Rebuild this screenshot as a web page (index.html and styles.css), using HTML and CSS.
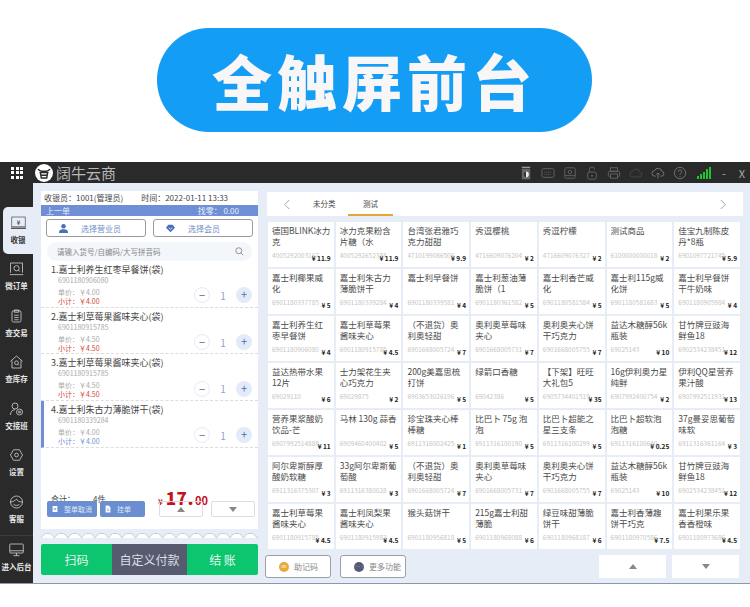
FILE: index.html
```html
<!DOCTYPE html>
<html lang="zh-CN">
<head>
  <meta charset="UTF-8" />
  <title>全触屏前台</title>
  <link rel="stylesheet" href="styles.css">
</head>
<body>
  <!-- Banner -->
  <div class="banner">
    <div class="pill">全触屏前台</div>
  </div>

  <div class="app">
    <!-- Title bar -->
    <header class="titlebar">
      <div class="grid-btn"><i></i><i></i><i></i><i></i><i></i><i></i><i></i><i></i><i></i></div>
      <svg class="logo" viewBox="0 0 20 20"><circle cx="10" cy="10" r="10" fill="#fff"/><path d="M3.5 5.5c1 2 2.500 2.500 6.500 2.500s5.500-.5 6.500-2.500M5 9.500h10M6 9.500l1 6h6l1-6M6.500 12.500h7" fill="none" stroke="#2a2a2a" stroke-width="1.600"/></svg>
      <span class="app-name">阔牛云商</span>
      <div class="tools">
        <svg viewBox="0 0 16 20" class="tool"><rect x="2" y="1" width="12" height="2" fill="#999"/><rect x="2" y="4" width="12" height="15" fill="#666"/><circle cx="8" cy="12" r="4" fill="#eee"/><path d="M8 8a4 4 0 0 0 0 8z" fill="#333"/></svg>
        <svg viewBox="0 0 16 16" class="tool"><rect x="1" y="3" width="14" height="10" rx="2" fill="none" stroke="#666"/><path d="M4 7h8M4 9.500h8" stroke="#666" stroke-dasharray="1 1"/></svg>
        <svg viewBox="0 0 16 16" class="tool"><rect x="2" y="2" width="12" height="12" rx="2" fill="none" stroke="#666"/><circle cx="8" cy="7" r="2" fill="none" stroke="#666"/><path d="M2 11h12" stroke="#666"/></svg>
        <svg viewBox="0 0 16 16" class="tool"><rect x="3" y="7" width="10" height="8" rx="2" fill="none" stroke="#666"/><path d="M5 7V4a3 3 0 0 1 6 0" fill="none" stroke="#666"/><circle cx="8" cy="11" r="1" fill="#666"/></svg>
        <svg viewBox="0 0 16 16" class="tool"><rect x="4" y="2" width="8" height="4" fill="none" stroke="#666"/><rect x="1.500" y="6" width="13" height="6" rx="1.500" fill="none" stroke="#666"/><rect x="4" y="9" width="8" height="5" fill="#2a2a2a" stroke="#666"/></svg>
        <svg viewBox="0 0 18 16" class="tool"><path d="M5 13a3.500 3.500 0 0 1-.5-7 5 5 0 0 1 9.500 1 3 3 0 0 1-1 6z" fill="none" stroke="#4c4c4c"/></svg>
        <svg viewBox="0 0 18 16" class="tool"><path d="M6 12H5a3.500 3.500 0 0 1-.5-7 5 5 0 0 1 9.500 1 3 3 0 0 1-1 6h-1M9 15V8M7 10l2-2 2 2" fill="none" stroke="#888"/></svg>
        <svg viewBox="0 0 16 16" class="tool"><circle cx="8" cy="8" r="6.500" fill="none" stroke="#777"/><path d="M6 6.500a2 2 0 1 1 2.500 2c-.5.200-.5.500-.5 1.500M8 11.500v1" fill="none" stroke="#777"/></svg>
        <div class="signal"><i></i><i></i><i></i><i></i><i></i></div>
        <span class="win-btn">-</span>
        <span class="win-btn">X</span>
      </div>
    </header>

    <div class="main">
      <!-- Side nav -->
      <nav class="side">
        <div class="side-item active">
          <svg viewBox="0 0 20 18"><rect x="1" y="1" width="18" height="13" fill="none" stroke="#555"/><path d="M0 16h20" stroke="#555" stroke-width="2"/><text x="10" y="11" font-size="8" text-anchor="middle" fill="#555">¥</text></svg>
          <span>收银</span>
        </div>
        <div class="side-item">
          <svg viewBox="0 0 20 18"><path d="M2 14V1h16v13" fill="none" stroke="#ddd"/><circle cx="10" cy="8" r="3.500" fill="none" stroke="#ddd"/><path d="M12.500 10.500l2 2M1 16.500h18" stroke="#ddd"/></svg>
          <span>微订单</span>
        </div>
        <div class="side-item">
          <svg viewBox="0 0 20 18"><rect x="4" y="2" width="12" height="15" rx="2" fill="none" stroke="#ddd"/><path d="M7 1h6v3H7zM7 8h6M7 11h6M7 14h6" fill="none" stroke="#ddd"/></svg>
          <span>查交易</span>
        </div>
        <div class="side-item">
          <svg viewBox="0 0 20 18"><path d="M2 8l8-7 8 7M4 7v10h12V7" fill="none" stroke="#ddd"/><circle cx="10" cy="10" r="2.500" fill="none" stroke="#ddd"/><path d="M12 12l1.500 1.500" stroke="#ddd"/></svg>
          <span>查库存</span>
        </div>
        <div class="side-item">
          <svg viewBox="0 0 20 18"><circle cx="8" cy="5" r="4" fill="none" stroke="#ddd"/><path d="M2 17c0-4 2-7 6-7" fill="none" stroke="#ddd"/><circle cx="14" cy="13" r="4" fill="none" stroke="#ddd"/><path d="M12 12h4M12 14h4" stroke="#ddd"/></svg>
          <span>交接班</span>
        </div>
        <div class="side-item">
          <svg viewBox="0 0 20 18"><path d="M6 2h8l4 7-4 7H6L2 9z" fill="none" stroke="#ddd"/><circle cx="10" cy="9" r="2.500" fill="none" stroke="#ddd"/></svg>
          <span>设置</span>
        </div>
        <div class="side-item">
          <svg viewBox="0 0 20 18"><circle cx="10" cy="9" r="8" fill="none" stroke="#ddd"/><path d="M2 9c4 0 6-2 8-4 1 3 4 4 8 4M6 12c2 2 6 2 8 0" fill="none" stroke="#ddd"/></svg>
          <span>客服</span>
        </div>
        <div class="side-item backend">
          <svg viewBox="0 0 20 18"><rect x="1" y="1" width="18" height="12" rx="1" fill="none" stroke="#ddd"/><path d="M1 10h18M10 13v3M6 16.500h8" stroke="#ddd"/></svg>
          <span>进入后台</span>
        </div>
      </nav>

      <!-- Cart -->
      <section class="cart">
        <div class="cart-paper">
          <div class="cashier"><span>收银员：1001(管理员)</span><span>时间：2022-01-11 13:33</span></div>
          <div class="last-order"><span>上一单</span><span class="change">找零：&nbsp;0.00</span></div>
          <div class="pick-row">
            <div class="pick-btn">
              <svg viewBox="0 0 12 12"><circle cx="6" cy="3" r="3" fill="#4a70b8"/><path d="M0 12c0-4 2-5 6-5s6 1 6 5z" fill="#4a70b8"/></svg>
              <span>选择营业员</span>
            </div>
            <div class="pick-btn">
              <svg viewBox="0 0 12 12"><path d="M3 1h6l3 4-6 6-6-6z" fill="#4a70b8"/><path d="M3.500 5L6 7l2.500-2" fill="none" stroke="#fff"/></svg>
              <span>选择会员</span>
            </div>
          </div>
          <div class="search">
            <span>请输入货号/自编码/大写拼音码</span>
            <svg viewBox="0 0 12 12"><circle cx="5" cy="5" r="4" fill="none" stroke="#777"/><path d="M8 8l3 3" stroke="#777"/></svg>
          </div>

          <div class="cart-item">
            <div class="item-info">
              <div class="item-name">1.嘉士利养生红枣早餐饼(袋)</div>
              <div class="item-code">6901180906080</div>
              <div class="item-price">单价：￥4.00</div>
              <div class="item-sub">小计：￥4.00</div>
            </div>
            <div class="qty"><b class="minus">−</b><span>1</span><b class="plus">+</b></div>
          </div>
          <div class="cart-item">
            <div class="item-info">
              <div class="item-name">2.嘉士利草莓果酱味夹心(袋)</div>
              <div class="item-code">6901180915785</div>
              <div class="item-price">单价：￥4.50</div>
              <div class="item-sub">小计：￥4.50</div>
            </div>
            <div class="qty"><b class="minus">−</b><span>1</span><b class="plus">+</b></div>
          </div>
          <div class="cart-item">
            <div class="item-info">
              <div class="item-name">3.嘉士利草莓果酱味夹心(袋)</div>
              <div class="item-code">6901180915785</div>
              <div class="item-price">单价：￥4.50</div>
              <div class="item-sub">小计：￥4.50</div>
            </div>
            <div class="qty"><b class="minus">−</b><span>1</span><b class="plus">+</b></div>
          </div>
          <div class="cart-item selected">
            <div class="item-info">
              <div class="item-name">4.嘉士利朱古力薄脆饼干(袋)</div>
              <div class="item-code">6901180339284</div>
              <div class="item-price">单价：￥4.00</div>
              <div class="item-sub">小计：￥4.00</div>
            </div>
            <div class="qty"><b class="minus">−</b><span>1</span><b class="plus">+</b></div>
          </div>

          <div class="totals">
            <div class="sum"><span>合计：</span><span>4件</span></div>
            <div class="amount"><small>¥</small><strong>17.</strong><em>00</em></div>
          </div>
          <div class="cart-actions">
            <div class="blue-btn wide">
              <svg viewBox="0 0 10 12"><path d="M1 1h8v10H1z" fill="#fff"/><path d="M3 6h4" stroke="#6b8ed0" stroke-width="2"/></svg>
              <span>整单取消</span>
            </div>
            <div class="blue-btn">
              <svg viewBox="0 0 10 12"><path d="M1 0h5l3 3v9H1z" fill="#fff"/><path d="M3 6h4M3 8.500h4" stroke="#6b8ed0"/></svg>
              <span>挂单</span>
            </div>
            <div class="page-btn up"><i></i></div>
            <div class="page-btn down"><i></i></div>
          </div>
          <div class="wave"></div>
        </div>
        <div class="pay-row">
          <div class="pay green">扫码</div>
          <div class="pay slate">自定义付款</div>
          <div class="pay green">结 账</div>
        </div>
      </section>

      <!-- Goods -->
      <section class="goods">
        <div class="tabs">
          <svg class="chev" viewBox="0 0 8 14"><path d="M7 1L1 7l6 6" fill="none" stroke="#888"/></svg>
          <span class="tab first">未分类</span>
          <span class="tab current">测试</span>
          <svg class="chev right" viewBox="0 0 8 14"><path d="M1 1l6 6-6 6" fill="none" stroke="#888"/></svg>
        </div>

        <div class="goods-grid">
          <div class="good"><p>德国BLINK冰力克</p><div><span>4005292003167</span><b>¥ 11.9</b></div></div>
          <div class="good"><p>冰力克果粉含片糖（水</p><div><span>4005292652384</span><b>¥ 11.9</b></div></div>
          <div class="good"><p>台湾张君雅巧克力甜甜</p><div><span>4710199086506</span><b>¥ 9.9</b></div></div>
          <div class="good"><p>秀逗樱桃</p><div><span>4716609076204</span><b>¥ 2</b></div></div>
          <div class="good"><p>秀逗柠檬</p><div><span>4716609076327</span><b>¥ 2</b></div></div>
          <div class="good"><p>测试商品</p><div><span>6100000000018</span><b>¥ 2</b></div></div>
          <div class="good"><p>佳宝九制陈皮丹*8瓶</p><div><span>6901097721745</span><b>¥ 5.9</b></div></div>

          <div class="good"><p>嘉士利椰果威化</p><div><span>6901180337785</span><b>¥ 5</b></div></div>
          <div class="good"><p>嘉士利朱古力薄脆饼干</p><div><span>6901180339284</span><b>¥ 4</b></div></div>
          <div class="good"><p>嘉士利早餐饼</p><div><span>6901180339581</span><b>¥ 4</b></div></div>
          <div class="good"><p>嘉士利葱油薄脆饼（1</p><div><span>6901180361582</span><b>¥ 5</b></div></div>
          <div class="good"><p>嘉士利香芒威化</p><div><span>6901180581584</span><b>¥ 5</b></div></div>
          <div class="good"><p>嘉士利115g威化饼</p><div><span>6901180581683</span><b>¥ 5</b></div></div>
          <div class="good"><p>嘉士利早餐饼干牛奶味</p><div><span>6901180905984</span><b>¥ 4</b></div></div>

          <div class="good"><p>嘉士利养生红枣早餐饼</p><div><span>6901180906080</span><b>¥ 4</b></div></div>
          <div class="good"><p>嘉士利草莓果酱味夹心</p><div><span>6901180915785</span><b>¥ 4.5</b></div></div>
          <div class="good"><p>（不退货）奥利奥轻甜</p><div><span>6901668005724</span><b>¥ 7</b></div></div>
          <div class="good"><p>奥利奥草莓味夹心</p><div><span>6901668005731</span><b>¥ 7</b></div></div>
          <div class="good"><p>奥利奥夹心饼干巧克力</p><div><span>6901668005755</span><b>¥ 7</b></div></div>
          <div class="good"><p>益达木糖醇56k瓶装</p><div><span>69025143</span><b>¥ 10</b></div></div>
          <div class="good"><p>甘竹牌豆豉海鲜鱼18</p><div><span>6902534238451</span><b>¥ 12</b></div></div>

          <div class="good"><p>益达热带水果12片</p><div><span>69029110</span><b>¥ 6</b></div></div>
          <div class="good"><p>士力架花生夹心巧克力</p><div><span>69029875</span><b>¥ 2</b></div></div>
          <div class="good"><p>200g美嘉思梳打饼</p><div><span>6903653026196</span><b>¥ 5</b></div></div>
          <div class="good"><p>绿箭口香糖</p><div><span>69042386</span><b>¥ 5</b></div></div>
          <div class="good"><p>【下架】旺旺大礼包5</p><div><span>6905734401519</span><b>¥ 35</b></div></div>
          <div class="good"><p>16g伊利奥力星纯鲜</p><div><span>6907992400754</span><b>¥ 2</b></div></div>
          <div class="good"><p>伊利QQ星营养果汁酸</p><div><span>6907992511931</span><b>¥ 13</b></div></div>

          <div class="good"><p>营养果浆酸奶饮品-芒</p><div><span>6907992514888</span><b>¥ 11</b></div></div>
          <div class="good"><p>马林 130g 蒜香</p><div><span>6909460400402</span><b>¥ 5</b></div></div>
          <div class="good"><p>珍宝珠夹心棒棒糖</p><div><span>6911316002425</span><b>¥ 1</b></div></div>
          <div class="good"><p>比巴卜 75g 泡泡</p><div><span>6911316100190</span><b>¥ 5</b></div></div>
          <div class="good"><p>比巴卜超能之星三支条</p><div><span>6911316100299</span><b>¥ 5</b></div></div>
          <div class="good"><p>比巴卜超软泡泡糖</p><div><span>6911316100640</span><b>¥ 0.25</b></div></div>
          <div class="good"><p>37g曼妥思葡萄味软</p><div><span>6911316361164</span><b>¥ 3</b></div></div>

          <div class="good"><p>阿尔卑斯醇厚酸奶软糖</p><div><span>6911316375307</span><b>¥ 3</b></div></div>
          <div class="good"><p>33g阿尔卑斯葡萄酸</p><div><span>6911316380028</span><b>¥ 3</b></div></div>
          <div class="good"><p>（不退货）奥利奥轻甜</p><div><span>6901668005724</span><b>¥ 7</b></div></div>
          <div class="good"><p>奥利奥草莓味夹心</p><div><span>6901668005731</span><b>¥ 7</b></div></div>
          <div class="good"><p>奥利奥夹心饼干巧克力</p><div><span>6901668005755</span><b>¥ 7</b></div></div>
          <div class="good"><p>益达木糖醇56k瓶装</p><div><span>69025143</span><b>¥ 10</b></div></div>
          <div class="good"><p>甘竹牌豆豉海鲜鱼18</p><div><span>6902534238451</span><b>¥ 12</b></div></div>

          <div class="good"><p>嘉士利草莓果酱味夹心</p><div><span>6901180915785</span><b>¥ 4.5</b></div></div>
          <div class="good"><p>嘉士利凤梨果酱味夹心</p><div><span>6901180915983</span><b>¥ 4.5</b></div></div>
          <div class="good"><p>猴头菇饼干</p><div><span>6901180956818</span><b>¥ 5</b></div></div>
          <div class="good"><p>215g嘉士利甜薄脆</p><div><span>6901180968088</span><b>¥ 6</b></div></div>
          <div class="good"><p>绿豆味甜薄脆饼干</p><div><span>6901180968187</span><b>¥ 6</b></div></div>
          <div class="good"><p>嘉士利香薄趣饼干巧克</p><div><span>6901180970586</span><b>¥ 7.5</b></div></div>
          <div class="good"><p>嘉士利果乐果香香橙味</p><div><span>6901180973686</span><b>¥ 4.5</b></div></div>
        </div>

        <div class="goods-foot">
          <div class="foot-btn"><i class="dot amber">ABC</i><span>助记码</span></div>
          <div class="foot-btn"><i class="dot slate-dot">•••</i><span>更多功能</span></div>
          <div class="foot-page up"><i></i></div>
          <div class="foot-page down"><i></i></div>
        </div>
      </section>
    </div>
  </div>
</body>
</html>
```

FILE: styles.css
```css
* { box-sizing: border-box; }
body {
  margin: 0;
  background: #fff;
  font-family: "Noto Sans CJK SC", "Noto Sans", sans-serif;
  color: #444;
  width: 750px;
  height: 607px;
  overflow: hidden;
}

/* Banner */
.banner {
  height: 162px;
  padding: 28px 0 0 157px;
}
.pill {
  width: 435px;
  height: 104px;
  border-radius: 52px;
  background: #149df5;
  color: #f8f6f7;
  font-size: 60px;
  font-weight: 900;
  line-height: 104px;
  letter-spacing: 5px;
  text-align: center;
}

/* App frame */
.app {
  height: 422px;
  border-bottom: 1px solid #8d97ab;
  background: #e6edf6;
}
.titlebar {
  height: 21px;
  background: #2a2a2a;
  display: flex;
  align-items: center;
  padding-left: 11px;
}
.grid-btn {
  width: 12px;
  display: grid;
  grid-template-columns: repeat(3, 3px);
  gap: 1.5px;
}
.grid-btn i { height: 3px; background: #fff; }
.logo { width: 18px; height: 18px; margin-left: 12px; }
.app-name { margin-left: 3px; font-size: 15px; color: #b9b9b9; line-height: 21px; }
.tools {
  margin-left: auto;
  display: flex;
  align-items: center;
  gap: 8px;
  padding-right: 3px;
}
.tool { width: 14px; height: 14px; }
.signal {
  display: flex;
  align-items: flex-end;
  gap: 1px;
  height: 12px;
  margin-left: 2px;
}
.signal i { width: 2px; background: #1fc52e; }
.signal i:nth-child(1) { height: 3px; }
.signal i:nth-child(2) { height: 5px; }
.signal i:nth-child(3) { height: 7px; }
.signal i:nth-child(4) { height: 10px; }
.signal i:nth-child(5) { height: 12px; }
.win-btn { width: 10px; text-align: center; color: #aaa; font-size: 11px; line-height: 14px; }

.main { display: flex; height: 400px; }

/* Side nav */
.side {
  width: 33px;
  background: #2a2a2a;
  padding-top: 24px;
  flex: none;
}
.side-item {
  height: 46.5px;
  display: flex;
  flex-direction: column;
  align-items: center;
  justify-content: center;
  gap: 4px;
  color: #e8e8e8;
  font-size: 7.5px;
  font-weight: 700;
  white-space: nowrap;
}
.side-item svg { width: 15px; height: 14px; }
.side-item.active {
  margin-left: 3px;
  background: #e6edf6;
  color: #333;
  border-radius: 5px 0 0 5px;
}
.side-item.backend {
  margin-top: 2px;
  border-top: 1px solid #3d3d3d;
  height: 44px;
}

/* Cart */
.cart {
  width: 217px;
  margin-left: 8px;
  padding-top: 8px;
  flex: none;
}
.cart-paper {
  height: 347px;
  background: #fff;
  position: relative;
}
.cashier {
  height: 14px;
  display: flex;
  gap: 18px;
  padding-left: 3px;
  font-size: 8px;
  line-height: 14px;
  color: #444;
}
.last-order {
  height: 11px;
  background: #6f8fd4;
  color: #e8eefb;
  font-size: 8px;
  line-height: 11px;
  display: flex;
  justify-content: space-between;
  padding: 0 19px 0 5px;
}
.pick-row {
  display: flex;
  gap: 7px;
  padding: 3px 0 0 5px;
}
.pick-btn {
  width: 100px;
  height: 18px;
  border: 1px solid #9a9a9a;
  border-radius: 3px;
  display: flex;
  align-items: center;
  padding-left: 12px;
  gap: 13px;
  font-size: 8px;
  color: #6f8fc8;
}
.pick-btn svg { width: 9px; height: 9px; flex: none; }
.search {
  margin: 5px 0 0 6px;
  width: 205px;
  height: 19px;
  border-radius: 10px;
  background: #f3f6fb;
  display: flex;
  align-items: center;
  justify-content: space-between;
  padding: 0 8px 0 10px;
  font-size: 7.5px;
  color: #888;
}
.search svg { width: 9px; height: 9px; }

.cart-item {
  height: 46.7px;
  padding: 3px 6px 0 10px;
  border-bottom: 1px dashed #dcdcdc;
  display: flex;
  justify-content: space-between;
}
.cart-item.selected { border-left: 3px solid #6f8fd4; padding-left: 7px; }
.cart-item.selected .item-sub { color: #6f8fd4; }
.item-name { font-size: 9px; line-height: 12px; color: #444; }
.item-code { font-size: 7px; line-height: 9px; color: #aaa; padding-left: 7px; }
.item-price { font-size: 7px; line-height: 9px; color: #aaa; padding: 3px 0 0 7px; height: 12px; box-sizing: border-box; }
.item-sub { font-size: 7px; line-height: 9px; color: #d9443a; padding-left: 7px; }
.qty {
  display: flex;
  align-items: center;
  gap: 9px;
  padding-top: 20px;
}
.qty span { width: 8px; text-align: center; font-size: 10px; color: #8fa3c4; }
.qty b {
  width: 16px;
  height: 16px;
  border-radius: 50%;
  text-align: center;
  font-size: 11px;
  line-height: 15px;
  font-weight: 400;
}
.qty .minus { border: 1px solid #e6ebf3; color: #5a6a86; }
.qty .plus { background: #e3ebf8; color: #4a70b8; }

.totals {
  position: absolute;
  left: 10px;
  top: 298px;
  display: flex;
  align-items: center;
  width: 200px;
}
.sum { display: flex; gap: 18px; font-size: 8px; color: #444; width: 107px; }
.amount { color: #c8101a; font-weight: 700; display: flex; align-items: baseline; gap: 3px; }
.amount small { font-size: 8px; }
.amount strong { font-size: 17px; line-height: 17px; letter-spacing: .5px; }
.amount em { font-size: 11px; font-style: normal; margin-left: -2px; }

.cart-actions {
  position: absolute;
  left: 6px;
  top: 310px;
  display: flex;
  gap: 3px;
}
.blue-btn {
  width: 45px;
  height: 16px;
  border-radius: 2px;
  background: #6b8ed0;
  color: #dfe8f8;
  font-size: 7px;
  display: flex;
  align-items: center;
  padding-left: 5px;
  gap: 6px;
}
.blue-btn.wide { width: 50px; }
.blue-btn svg { width: 6px; height: 8px; flex: none; }
.page-btn {
  width: 44px;
  height: 16px;
  border: 1px solid #ddd;
  border-radius: 2px;
  display: flex;
  align-items: center;
  justify-content: center;
}
.page-btn.up { margin-left: 11px; }
.page-btn.down { margin-left: 5px; }
.page-btn i, .foot-page i {
  width: 0;
  height: 0;
  border-left: 4.5px solid transparent;
  border-right: 4.5px solid transparent;
}
.up i { border-bottom: 5px solid #888; }
.down i { border-top: 5px solid #888; }

.wave {
  position: absolute;
  left: 0;
  right: 0;
  bottom: 0;
  height: 9px;
  background: radial-gradient(circle at 6.75px 11px, #fff 6px, #c9ccd2 6.5px, #e6edf6 7.5px) 0 0 / 13.5px 9px repeat-x;
}

.pay-row {
  display: flex;
  margin-top: 6px;
  height: 31px;
  border-radius: 2px;
  overflow: hidden;
  color: #e4f5ee;
}
.pay {
  display: flex;
  align-items: center;
  justify-content: center;
  font-size: 12px;
}
.pay.green { background: #0cc56f; width: 71px; }
.pay.slate { background: #565b70; width: 75px; color: #dedfe5; }

/* Goods */
.goods {
  flex: 1;
  padding: 9px 7px 0 9px;
}
.tabs {
  width: 476px;
  height: 24px;
  background: #fff;
  display: flex;
  align-items: flex-end;
  padding-left: 17px;
  position: relative;
}
.chev { width: 6px; height: 11px; align-self: center; }
.chev.right { margin-left: auto; margin-right: 17px; }
.tab {
  font-size: 7.5px;
  height: 24px;
  line-height: 24px;
  color: #444;
}
.tab.first { margin-left: 23px; width: 24px; }
.tab.current {
  margin-left: 11px;
  width: 45px;
  text-align: center;
  border-bottom: 2px solid #e8a33d;
}
.goods-grid {
  margin: 6px 0 0 1px;
  width: 472px;
  display: grid;
  grid-template-columns: repeat(7, 1fr);
  grid-auto-rows: 45px;
  column-gap: 2px;
  row-gap: 2px;
}
.good {
  background: #fff;
  padding: 3px 3px 0 4px;
  position: relative;
}
.good p {
  margin: 0;
  height: 23px;
  font-size: 8.5px;
  line-height: 11.2px;
  color: #4a4a4a;
  overflow: hidden;
}
.good div { position: relative; }
.good span {
  position: absolute;
  left: 0;
  top: 2px;
  font-size: 6.5px;
  line-height: 10px;
  color: #c6c6c6;
  white-space: nowrap;
}
.good b {
  position: absolute;
  right: 0;
  top: 5px;
  font-size: 6.5px;
  line-height: 10px;
  color: #222;
  white-space: nowrap;
}
.goods-foot {
  display: flex;
  margin: 6px 0 0 -2px;
  height: 23px;
}
.foot-btn {
  width: 66px;
  height: 23px;
  border: 1px solid #9a9fa8;
  border-radius: 3px;
  background: #fff;
  display: flex;
  align-items: center;
  gap: 5px;
  padding-left: 13px;
  font-size: 8px;
  color: #888;
  margin-right: 9px;
}
.dot {
  width: 10px;
  height: 10px;
  border-radius: 50%;
  font-style: normal;
  font-size: 3px;
  line-height: 10px;
  text-align: center;
  color: #fff;
  flex: none;
}
.amber { background: #e8a93a; }
.slate-dot { background: #555b74; }
.foot-page {
  width: 67px;
  height: 23px;
  background: #fff;
  display: flex;
  align-items: center;
  justify-content: center;
}
.foot-page.up { margin-left: 184px; }
.foot-page.down { margin-left: 6px; }
```
